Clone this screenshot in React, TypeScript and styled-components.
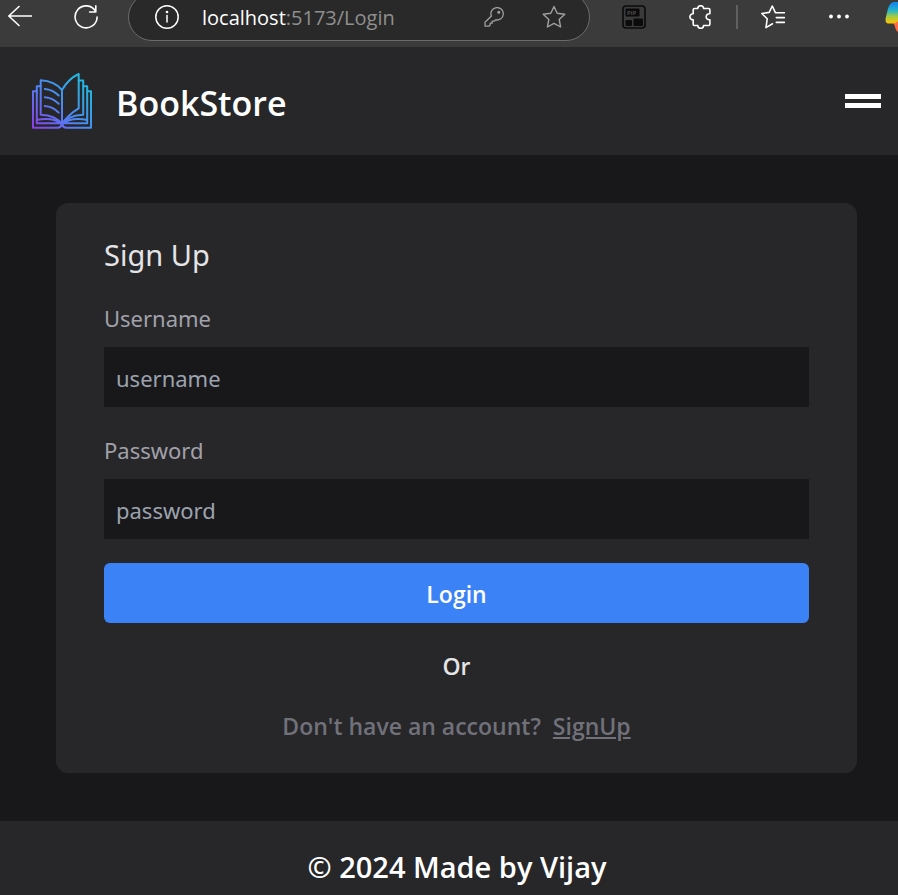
import React from "react";
import styled, { createGlobalStyle } from "styled-components";

const REGULAR_FONT = '"Noto Sans", "Open Sans", sans-serif';
const HEADING_FONT = '"Open Sans", "Noto Sans", sans-serif';

const GlobalStyle = createGlobalStyle`
  *, *::before, *::after { box-sizing: border-box; }
  body {
    margin: 0;
    background: #18181b;
    color: #fff;
    font-family: ${REGULAR_FONT};
    font-size: 22px;
    line-height: 36px;
  }
  button, input { font: inherit; }
`;

const Page = styled.div`
  min-height: 100vh;
  display: flex;
  flex-direction: column;
  overflow: hidden;
`;

const BrowserBar = styled.div`
  height: 47px;
  flex: none;
  display: flex;
  align-items: center;
  padding: 0 0 13px 8px;
  overflow: hidden;
  background: #3b3b3b;
`;

const ToolButton = styled.button<{ $before?: number; $width?: number }>`
  flex: none;
  display: flex;
  width: ${(p) => p.$width ?? 24}px;
  height: 34px;
  align-items: center;
  margin: 0 0 0 ${(p) => p.$before ?? 0}px;
  padding: 0;
  border: 0;
  background: none;
  color: #fff;
  cursor: pointer;
`;

const AddressBar = styled.div`
  flex: 1;
  min-width: 0;
  height: 48px;
  display: flex;
  align-items: center;
  margin-left: 30px;
  padding: 0 23px 0 26px;
  border: 1px solid #6b6b6b;
  border-radius: 24px;
  background: #292929;

  ${ToolButton} { color: #a0a0a0; }
  ${ToolButton}:first-child { color: #fff; }
`;

const Address = styled.div`
  flex: 1;
  min-width: 0;
  margin-left: 23px;
  padding-top: 2px;
  font-family: ${HEADING_FONT};
  font-size: 20px;
  line-height: 34px;
  white-space: nowrap;
  color: #8f8f8f;
`;

const Host = styled.span`
  color: #fff;
`;

const Divider = styled.span`
  flex: none;
  width: 2px;
  height: 24px;
  margin-left: 23px;
  background: #606060;
`;

const Icon = styled.svg`
  display: block;
  flex: none;
  fill: none;
  stroke: currentColor;
  stroke-linecap: round;
  stroke-linejoin: round;
`;

const Header = styled.header`
  display: flex;
  align-items: center;
  justify-content: space-between;
  padding: 24px 16px 24px 32px;
  background: #27272a;
`;

const Brand = styled.a`
  display: flex;
  align-items: center;
  gap: 24px;
  color: #fff;
  text-decoration: none;
`;

const BrandName = styled.h1`
  margin: 0;
  padding-top: 4px;
  font-family: ${HEADING_FONT};
  font-size: 34px;
  line-height: 56px;
  font-weight: 600;
`;

const MenuButton = styled.button`
  display: flex;
  flex-direction: column;
  gap: 4px;
  width: 38px;
  padding: 0 1px;
  border: 0;
  background: none;
  cursor: pointer;
`;

const MenuLine = styled.span`
  height: 5px;
  background: #fff;
`;

const Main = styled.main`
  flex: 1;
  padding: 48px 41px 48px 56px;
`;

const Card = styled.form`
  display: flex;
  flex-direction: column;
  gap: 24px;
  padding: 30px 48px;
  border-radius: 12px;
  background: #27272a;
`;

const Title = styled.h2`
  margin: 0;
  padding-top: 2px;
  font-size: 29px;
  line-height: 40px;
  font-weight: 400;
  color: #e4e4e7;
`;

const Field = styled.div`
  display: flex;
  flex-direction: column;
  gap: 12px;
`;

const Label = styled.label`
  padding-top: 2px;
  line-height: 34px;
  color: #a1a1aa;
`;

const TextInput = styled.input`
  width: 100%;
  height: 60px;
  padding: 14px 12px 12px;
  border: 0;
  border-radius: 0;
  outline: 0;
  background: #18181b;
  color: #f4f4f5;

  &::placeholder { color: #9ca3af; opacity: 1; }
`;

const SubmitButton = styled.button`
  height: 60px;
  padding: 14px 12px 12px;
  border: 0;
  border-radius: 6px;
  background: #3b82f6;
  color: #fff;
  font-family: ${HEADING_FONT};
  font-size: 23px;
  line-height: 34px;
  font-weight: 600;
  cursor: pointer;
`;

const Note = styled.p<{ $muted?: boolean }>`
  margin: 0;
  padding-top: 2px;
  text-align: center;
  font-family: ${HEADING_FONT};
  font-size: 23px;
  line-height: 34px;
  font-weight: 600;
  color: ${(p) => (p.$muted ? "#71717a" : "#e4e4e7")};
`;

const SignUpLink = styled.a`
  margin-left: 12px;
  color: inherit;
  text-decoration: underline;
`;

const Footer = styled.footer`
  padding: 26px 32px 8px 48px;
  background: #27272a;
  text-align: center;
  font-family: ${HEADING_FONT};
  font-size: 29px;
  line-height: 40px;
  font-weight: 600;
`;

const STAR =
  "M12 1.5 L15.2 8.3 L22.8 9.3 L17.2 14.5 L18.6 22 L12 18.4 L5.4 22 L6.8 14.5 L1.2 9.3 L8.8 8.3 Z";

const BookLogo = () => (
  <Icon width="60" height="60" viewBox="0 0 60 60" aria-hidden="true">
    <defs>
      <linearGradient id="book" gradientUnits="userSpaceOnUse" x1="4" y1="58" x2="48" y2="14">
        <stop offset="0" stopColor="#8a3fe8" />
        <stop offset="0.45" stopColor="#557df5" />
        <stop offset="1" stopColor="#25b3e2" />
      </linearGradient>
    </defs>
    <g stroke="url(#book)" strokeWidth="2">
      <path d="M30 19 C25 13 18 9.8 8.7 9.3 V43.8 C18 44 26 47.5 30 53.4 Z" />
      <path d="M30 19 C34 12 39 6.5 46.7 3 V37.3 C39 42 33.5 47 30 53.4" />
      <path d="M8.7 15.3 H4.8 V49.8 M4.8 49 C14 46.8 24 48 30 53.4 M4.8 49.8 V52.3 H29" />
      <path d="M4.8 20.3 H1 V56.8 H25.5 C28 56.8 29.5 55 30 53.4 C30.5 55 32 56.8 34.5 56.8 H59 V20.3 H55.2" />
      <path d="M46.7 9.5 H51.2 V43.8 C42 44 34 47.5 30 53.4" />
      <path d="M51.2 15.3 H55.2 V52.3 H31 M55.2 49 C46 46.8 36 48 30 53.4" />
      <path d="M12.8 17.9 C18 18.3 23 20.8 26.7 24.5 M12.8 26.2 C18 26.6 23 29.1 26.7 32.8 M12.8 35 C18 35.4 23 37.9 26.7 41.6" />
    </g>
  </Icon>
);

export default function App() {
  return (
    <Page>
      <GlobalStyle />
      <BrowserBar>
        <ToolButton aria-label="Back">
          <Icon width="24" height="24" viewBox="0 0 24 24" strokeWidth="1.6">
            <path d="M23.5 11 H1 M11 1.5 L0.8 11 L11 20.5" />
          </Icon>
        </ToolButton>
        <ToolButton aria-label="Reload" $before={42}>
          <Icon width="24" height="24" viewBox="0 0 24 24" strokeWidth="1.6">
            <path d="M21.6 6.3 A11 11 0 1 0 23.1 12 M21.8 0.8 V7 H15.6" />
          </Icon>
        </ToolButton>
        <AddressBar>
          <ToolButton aria-label="Site information">
            <Icon width="24" height="24" viewBox="0 0 24 24" strokeWidth="1.5">
              <circle cx="12" cy="12" r="11.2" />
              <path d="M12 10.5 V17" />
              <circle cx="12" cy="7" r="0.6" fill="currentColor" />
            </Icon>
          </ToolButton>
          <Address>
            <Host>localhost</Host>:5173/Login
          </Address>
          <ToolButton aria-label="Saved passwords" $width={20}>
            <Icon width="20" height="20" viewBox="0 0 20 20" strokeWidth="1.3">
              <path d="M7.1 8.3 A6.2 6.2 0 1 1 11.7 12.8 L10.2 14.2 H8.2 V16.2 H6.2 V18 L5 19.2 H1 V15.3 L7.4 9 Z" />
              <circle cx="14.8" cy="5.3" r="0.9" fill="currentColor" />
            </Icon>
          </ToolButton>
          <ToolButton aria-label="Add to favorites" $before={38}>
            <Icon width="24" height="24" viewBox="0 0 24 24" strokeWidth="1.4">
              <path d={STAR} />
            </Icon>
          </ToolButton>
        </AddressBar>
        <ToolButton aria-label="Picture in picture" $before={32}>
          <Icon width="24" height="24" viewBox="0 0 24 24">
            <rect x="1" y="1" width="22" height="22" rx="3" stroke="#0b0b0b" strokeWidth="1.6" />
            <rect x="3.5" y="3.5" width="14" height="8" rx="1" fill="#0b0b0b" stroke="none" />
            <rect x="3.5" y="15" width="6.5" height="6" rx="1" fill="#0b0b0b" stroke="none" />
            <rect x="11.5" y="13.5" width="9.5" height="7.5" rx="1" fill="#0b0b0b" stroke="none" />
            <text x="5" y="9.8" fontSize="6" fontWeight="600" fill="#555" stroke="none">PiP</text>
          </Icon>
        </ToolButton>
        <ToolButton aria-label="Extensions" $before={43}>
          <Icon width="24" height="24" viewBox="0 0 24 24" strokeWidth="1.6">
            <path d="M5.5 3.5 H8.8 C8.8 -0.2 14.6 -0.2 14.6 3.5 H19.6 Q20.9 3.5 20.9 4.8 V8.8 C15.9 8.2 15.9 15.3 20.9 14.7 V19.2 Q20.9 20.5 19.6 20.5 H14.6 C14.6 24.3 8.8 24.3 8.8 20.5 H5.5 Q4.2 20.5 4.2 19.2 V14.8 C-0.2 14.8 -0.2 8.8 4.2 8.8 V4.8 Q4.2 3.5 5.5 3.5 Z" />
          </Icon>
        </ToolButton>
        <Divider />
        <ToolButton aria-label="Favorites" $before={23}>
          <Icon width="24" height="24" viewBox="0 0 24 24" strokeWidth="1.6">
            <path d="M16.8 7.8 H14.5 L11.3 1 L8.2 7.4 L0.8 8.5 L6.2 13.8 L5 22.6 L11.5 18.8 M16.8 7.8 H23.5 M15.3 12.6 H23.5 M15.3 17.4 H23.5" />
          </Icon>
        </ToolButton>
        <ToolButton aria-label="More" $before={42}>
          <Icon width="24" height="24" viewBox="0 0 24 24" strokeWidth="0">
            <g fill="currentColor">
              <circle cx="4" cy="11.5" r="1.9" />
              <circle cx="12" cy="11.5" r="1.9" />
              <circle cx="20" cy="11.5" r="1.9" />
            </g>
          </Icon>
        </ToolButton>
        <ToolButton aria-label="Copilot" $before={34} $width={13}>
          <Icon width="13" height="32" viewBox="0 0 13 32" strokeWidth="0">
            <defs>
              <linearGradient id="copilot" x1="0" y1="0" x2="0" y2="1">
                <stop offset="0.1" stopColor="#168bea" />
                <stop offset="0.4" stopColor="#25b6c8" />
                <stop offset="0.68" stopColor="#a6cb42" />
                <stop offset="1" stopColor="#ffc400" />
              </linearGradient>
            </defs>
            <path d="M8 20 H13 V31 C10 29 10.5 25 8 21 Z" fill="#ff6a45" />
            <path d="M13 1 H9.5 C6 1 4 4 2.6 9 L0.7 17 C0 20.5 1 22.5 4 22.5 H9 L13 20.5 Z" fill="url(#copilot)" />
          </Icon>
        </ToolButton>
      </BrowserBar>

      <Header>
        <Brand href="#">
          <BookLogo />
          <BrandName>BookStore</BrandName>
        </Brand>
        <MenuButton aria-label="Menu">
          <MenuLine />
          <MenuLine />
        </MenuButton>
      </Header>

      <Main>
        <Card onSubmit={(e: React.FormEvent) => e.preventDefault()}>
          <Title>Sign Up</Title>
          <Field>
            <Label htmlFor="username">Username</Label>
            <TextInput id="username" type="text" placeholder="username" />
          </Field>
          <Field>
            <Label htmlFor="password">Password</Label>
            <TextInput id="password" type="password" placeholder="password" />
          </Field>
          <SubmitButton type="submit">Login</SubmitButton>
          <Note>Or</Note>
          <Note $muted>
            Don't have an account?
            <SignUpLink href="#signup">SignUp</SignUpLink>
          </Note>
        </Card>
      </Main>

      <Footer>© 2024 Made by Vijay</Footer>
    </Page>
  );
}
